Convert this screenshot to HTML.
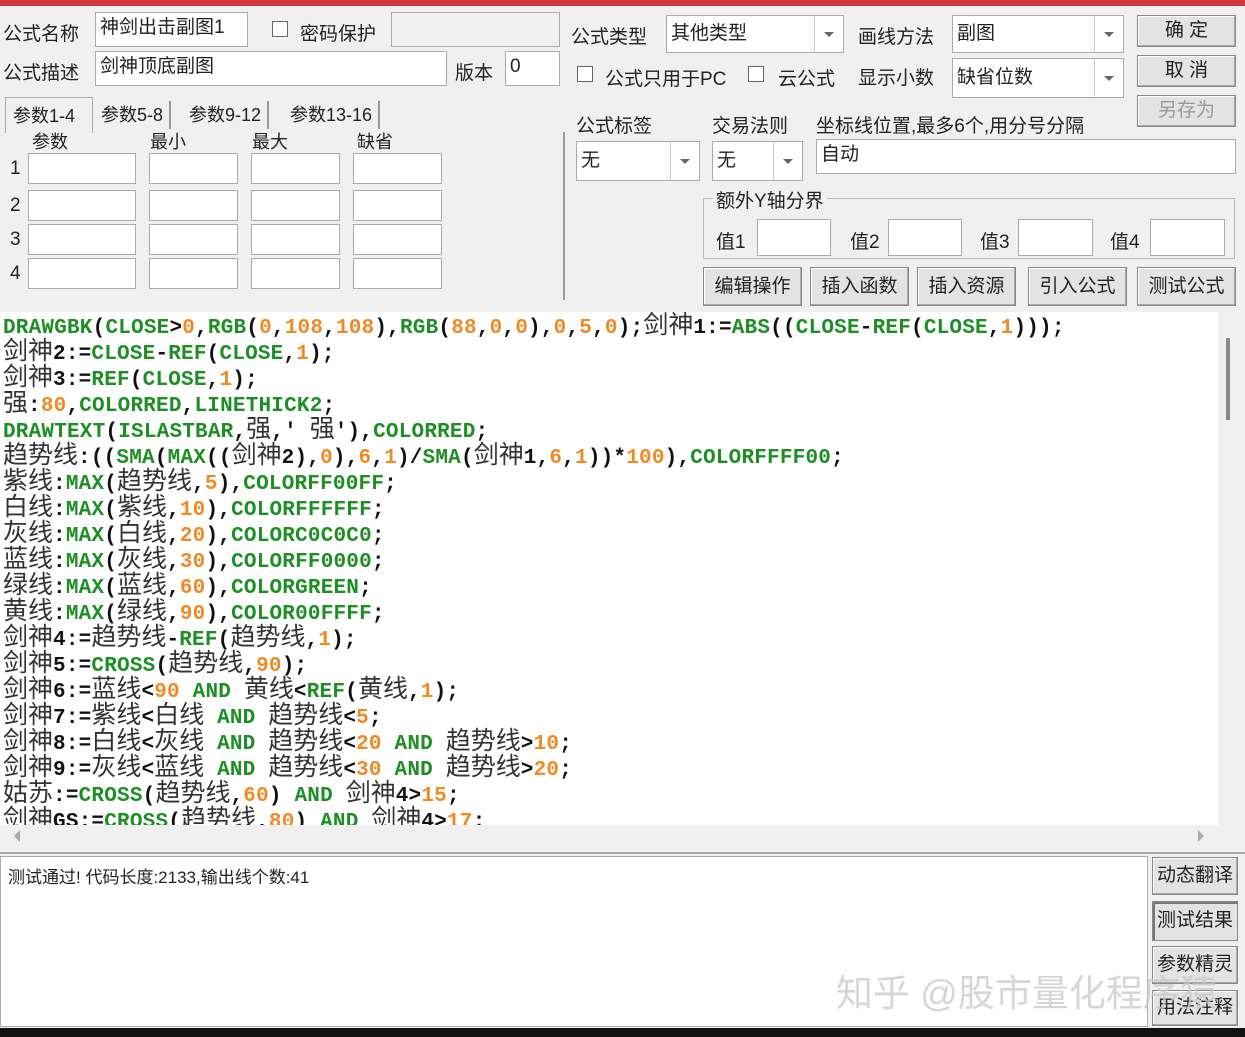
<!DOCTYPE html><html><head><meta charset="utf-8"><style>
*{margin:0;padding:0;box-sizing:border-box}
body{width:1245px;height:1037px;background:#f0f0f0;position:relative;overflow:hidden;font-family:"Liberation Sans","Noto Sans CJK SC",sans-serif;font-size:19px;color:#222}
.a{position:absolute;white-space:nowrap}
.in{position:absolute;background:#fff;border:1px solid #aaa;padding-left:4px;line-height:1.6;overflow:hidden;white-space:nowrap}
.cb{position:absolute;width:16px;height:16px;border:1px solid #666;background:#fff}
.btn{position:absolute;border:1px solid #888;background:#e3e3e3;text-align:center;box-shadow:inset -1px -1px 0 #aaa,inset 1px 1px 0 #fff}
.sel{position:absolute;background:#fff;border:1px solid #aaa;padding-left:4px}
.sel i{position:absolute;right:0;top:0;bottom:0;width:29px;border-left:1px solid #ccc}
.sel i:after{content:"";position:absolute;left:9px;top:50%;margin-top:-2px;border:5px solid transparent;border-top:5px solid #666}
#code{position:absolute;left:0;top:312px;width:1218px;height:513px;background:#fff;overflow:hidden}
#code div{height:26px;line-height:26px;font-family:"Liberation Mono",monospace;font-weight:bold;font-size:21px;letter-spacing:0.2px;color:#111;white-space:nowrap;padding-left:3px}
#code b{font-family:"Liberation Sans","Noto Sans CJK SC",sans-serif;font-weight:normal;font-size:25px;letter-spacing:0;color:#333}
.g{color:#1d8f24}.o{color:#f08a24}
</style></head><body>
<div class="a" style="left:0;top:0;width:1245px;height:6px;background:#d0343c"></div>
<div class="a" style="left:3px;top:19px">公式名称</div>
<div class="in" style="left:95px;top:12px;width:153px;height:35px">神剑出击副图1</div>
<div class="cb" style="left:272px;top:21px"></div>
<div class="a" style="left:300px;top:19px">密码保护</div>
<div class="in" style="left:391px;top:12px;width:169px;height:35px;background:#f0f0f0"></div>
<div class="a" style="left:3px;top:58px">公式描述</div>
<div class="in" style="left:95px;top:51px;width:352px;height:35px">剑神顶底副图</div>
<div class="a" style="left:455px;top:58px">版本</div>
<div class="in" style="left:505px;top:51px;width:55px;height:35px">0</div>
<div class="a" style="left:5px;top:97px;width:88px;height:36px;font-size:18px;background:#f0f0f0;border:1px solid #aaa;border-bottom:none;padding:4px 0 0 7px">参数1-4</div>
<div class="a" style="left:95px;top:101px;font-size:18px;border-right:2px solid #999;padding:0 6px;height:28px">参数5-8</div>
<div class="a" style="left:183px;top:101px;font-size:18px;border-right:2px solid #999;padding:0 6px;height:28px">参数9-12</div>
<div class="a" style="left:284px;top:101px;font-size:18px;border-right:2px solid #999;padding:0 6px;height:28px">参数13-16</div>
<div class="a" style="left:563px;top:132px;width:2px;height:168px;background:#999"></div>
<div class="a" style="left:32px;top:128px;font-size:18px">参数</div>
<div class="a" style="left:150px;top:128px;font-size:18px">最小</div>
<div class="a" style="left:252px;top:128px;font-size:18px">最大</div>
<div class="a" style="left:357px;top:128px;font-size:18px">缺省</div>
<div class="a" style="left:10px;top:158px">1</div><div class="a" style="left:10px;top:195px">2</div><div class="a" style="left:10px;top:229px">3</div><div class="a" style="left:10px;top:263px">4</div>
<div class="in" style="left:28px;top:153px;width:108px;height:31px"></div><div class="in" style="left:149px;top:153px;width:89px;height:31px"></div><div class="in" style="left:251px;top:153px;width:89px;height:31px"></div><div class="in" style="left:353px;top:153px;width:89px;height:31px"></div>
<div class="in" style="left:28px;top:190px;width:108px;height:31px"></div><div class="in" style="left:149px;top:190px;width:89px;height:31px"></div><div class="in" style="left:251px;top:190px;width:89px;height:31px"></div><div class="in" style="left:353px;top:190px;width:89px;height:31px"></div>
<div class="in" style="left:28px;top:224px;width:108px;height:31px"></div><div class="in" style="left:149px;top:224px;width:89px;height:31px"></div><div class="in" style="left:251px;top:224px;width:89px;height:31px"></div><div class="in" style="left:353px;top:224px;width:89px;height:31px"></div>
<div class="in" style="left:28px;top:258px;width:108px;height:31px"></div><div class="in" style="left:149px;top:258px;width:89px;height:31px"></div><div class="in" style="left:251px;top:258px;width:89px;height:31px"></div><div class="in" style="left:353px;top:258px;width:89px;height:31px"></div>

<div class="a" style="left:571px;top:22px">公式类型</div>
<div class="sel" style="left:666px;top:15px;width:178px;height:38px;line-height:36px">其他类型<i></i></div>
<div class="a" style="left:858px;top:22px">画线方法</div>
<div class="sel" style="left:952px;top:15px;width:172px;height:38px;line-height:36px">副图<i></i></div>
<div class="btn" style="left:1137px;top:15px;width:99px;height:32px;line-height:30px">确 定</div>
<div class="btn" style="left:1137px;top:55px;width:99px;height:32px;line-height:30px">取 消</div>
<div class="btn" style="left:1137px;top:95px;width:99px;height:32px;line-height:30px;color:#999">另存为</div>
<div class="cb" style="left:577px;top:66px"></div>
<div class="a" style="left:605px;top:64px">公式只用于PC</div>
<div class="cb" style="left:748px;top:66px"></div>
<div class="a" style="left:778px;top:64px">云公式</div>
<div class="a" style="left:858px;top:63px">显示小数</div>
<div class="sel" style="left:952px;top:58px;width:172px;height:40px;line-height:38px">缺省位数<i></i></div>
<div class="a" style="left:576px;top:111px">公式标签</div>
<div class="a" style="left:712px;top:111px">交易法则</div>
<div class="a" style="left:816px;top:111px">坐标线位置,最多6个,用分号分隔</div>
<div class="sel" style="left:576px;top:141px;width:124px;height:40px;line-height:38px">无<i></i></div>
<div class="sel" style="left:712px;top:141px;width:91px;height:40px;line-height:38px">无<i></i></div>
<div class="in" style="left:816px;top:139px;width:420px;height:35px">自动</div>
<div class="a" style="left:703px;top:198px;width:532px;height:61px;border:1px solid #bbb"></div>
<div class="a" style="left:713px;top:186px;background:#f0f0f0;padding:0 3px">额外Y轴分界</div>
<div class="a" style="left:716px;top:227px">值1</div><div class="in" style="left:757px;top:219px;width:74px;height:37px"></div>
<div class="a" style="left:850px;top:227px">值2</div><div class="in" style="left:888px;top:219px;width:74px;height:37px"></div>
<div class="a" style="left:980px;top:227px">值3</div><div class="in" style="left:1018px;top:219px;width:75px;height:37px"></div>
<div class="a" style="left:1110px;top:227px">值4</div><div class="in" style="left:1150px;top:219px;width:75px;height:37px"></div>
<div class="btn" style="left:703px;top:267px;width:99px;height:39px;line-height:37px">编辑操作</div>
<div class="btn" style="left:810px;top:267px;width:99px;height:39px;line-height:37px">插入函数</div>
<div class="btn" style="left:917px;top:267px;width:99px;height:39px;line-height:37px">插入资源</div>
<div class="btn" style="left:1028px;top:267px;width:99px;height:39px;line-height:37px">引入公式</div>
<div class="btn" style="left:1137px;top:267px;width:99px;height:39px;line-height:37px">测试公式</div>

<div id="code">
<div><span class="g">DRAWGBK</span>(<span class="g">CLOSE</span>&gt;<span class="o">0</span>,<span class="g">RGB</span>(<span class="o">0</span>,<span class="o">108</span>,<span class="o">108</span>),<span class="g">RGB</span>(<span class="o">88</span>,<span class="o">0</span>,<span class="o">0</span>),<span class="o">0</span>,<span class="o">5</span>,<span class="o">0</span>);<b>剑神</b>1:=<span class="g">ABS</span>((<span class="g">CLOSE</span>-<span class="g">REF</span>(<span class="g">CLOSE</span>,<span class="o">1</span>)));</div>
<div><b>剑神</b>2:=<span class="g">CLOSE</span>-<span class="g">REF</span>(<span class="g">CLOSE</span>,<span class="o">1</span>);</div>
<div><b>剑神</b>3:=<span class="g">REF</span>(<span class="g">CLOSE</span>,<span class="o">1</span>);</div>
<div><b>强</b>:<span class="o">80</span>,<span class="g">COLORRED</span>,<span class="g">LINETHICK2</span>;</div>
<div><span class="g">DRAWTEXT</span>(<span class="g">ISLASTBAR</span>,<b>强</b>,' <b>强</b>'),<span class="g">COLORRED</span>;</div>
<div><b>趋势线</b>:((<span class="g">SMA</span>(<span class="g">MAX</span>((<b>剑神</b>2),<span class="o">0</span>),<span class="o">6</span>,<span class="o">1</span>)/<span class="g">SMA</span>(<b>剑神</b>1,<span class="o">6</span>,<span class="o">1</span>))*<span class="o">100</span>),<span class="g">COLORFFFF00</span>;</div>
<div><b>紫线</b>:<span class="g">MAX</span>(<b>趋势线</b>,<span class="o">5</span>),<span class="g">COLORFF00FF</span>;</div>
<div><b>白线</b>:<span class="g">MAX</span>(<b>紫线</b>,<span class="o">10</span>),<span class="g">COLORFFFFFF</span>;</div>
<div><b>灰线</b>:<span class="g">MAX</span>(<b>白线</b>,<span class="o">20</span>),<span class="g">COLORC0C0C0</span>;</div>
<div><b>蓝线</b>:<span class="g">MAX</span>(<b>灰线</b>,<span class="o">30</span>),<span class="g">COLORFF0000</span>;</div>
<div><b>绿线</b>:<span class="g">MAX</span>(<b>蓝线</b>,<span class="o">60</span>),<span class="g">COLORGREEN</span>;</div>
<div><b>黄线</b>:<span class="g">MAX</span>(<b>绿线</b>,<span class="o">90</span>),<span class="g">COLOR00FFFF</span>;</div>
<div><b>剑神</b>4:=<b>趋势线</b>-<span class="g">REF</span>(<b>趋势线</b>,<span class="o">1</span>);</div>
<div><b>剑神</b>5:=<span class="g">CROSS</span>(<b>趋势线</b>,<span class="o">90</span>);</div>
<div><b>剑神</b>6:=<b>蓝线</b>&lt;<span class="o">90</span> <span class="g">AND</span> <b>黄线</b>&lt;<span class="g">REF</span>(<b>黄线</b>,<span class="o">1</span>);</div>
<div><b>剑神</b>7:=<b>紫线</b>&lt;<b>白线</b> <span class="g">AND</span> <b>趋势线</b>&lt;<span class="o">5</span>;</div>
<div><b>剑神</b>8:=<b>白线</b>&lt;<b>灰线</b> <span class="g">AND</span> <b>趋势线</b>&lt;<span class="o">20</span> <span class="g">AND</span> <b>趋势线</b>&gt;<span class="o">10</span>;</div>
<div><b>剑神</b>9:=<b>灰线</b>&lt;<b>蓝线</b> <span class="g">AND</span> <b>趋势线</b>&lt;<span class="o">30</span> <span class="g">AND</span> <b>趋势线</b>&gt;<span class="o">20</span>;</div>
<div><b>姑苏</b>:=<span class="g">CROSS</span>(<b>趋势线</b>,<span class="o">60</span>) <span class="g">AND</span> <b>剑神</b>4&gt;<span class="o">15</span>;</div>
<div><b>剑神</b>GS:=<span class="g">CROSS</span>(<b>趋势线</b>,<span class="o">80</span>) <span class="g">AND</span> <b>剑神</b>4&gt;<span class="o">17</span>;</div>
</div>
<div class="a" style="left:1218px;top:312px;width:24px;height:513px;background:#f0f0f0"></div>
<div class="a" style="left:1226px;top:338px;width:4px;height:82px;background:#888"></div>
<div class="a" style="left:0;top:825px;width:1218px;height:26px;background:#f0f0f0"></div>
<div class="a" style="left:8px;top:830px;border:6px solid transparent;border-right:6px solid #aaa"></div>
<div class="a" style="left:1198px;top:830px;border:6px solid transparent;border-left:6px solid #aaa"></div>
<div class="a" style="left:0;top:852px;width:1245px;height:2px;background:#aaa"></div>
<div class="a" style="left:0;top:856px;width:1148px;height:171px;background:#fff;border:1px solid #aaa"></div>
<div class="a" style="left:8px;top:863px;font-size:17px">测试通过! 代码长度:2133,输出线个数:41</div>
<div class="btn" style="left:1152px;top:857px;width:86px;height:38px;line-height:36px">动态翻译</div>
<div class="btn" style="left:1152px;top:901px;width:86px;height:40px;line-height:38px;box-shadow:inset 2px 2px 0 #777">测试结果</div>
<div class="btn" style="left:1152px;top:946px;width:86px;height:38px;line-height:36px">参数精灵</div>
<div class="btn" style="left:1152px;top:990px;width:86px;height:36px;line-height:34px">用法注释</div>
<div class="a" style="left:836px;top:963px;font-size:37px;color:rgba(200,200,200,.75);z-index:5">知乎 @股市量化程序猿</div>
<div class="a" style="left:0;top:1028px;width:1245px;height:9px;background:#111"></div>
</body></html>
